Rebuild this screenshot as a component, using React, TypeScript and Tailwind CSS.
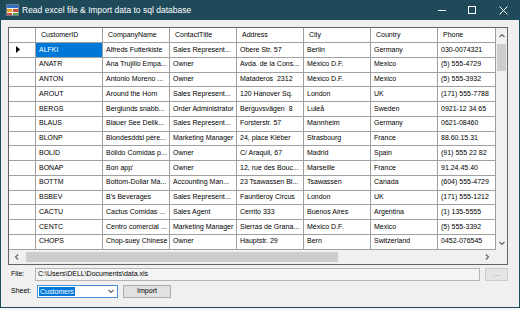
import React from "react";

const COLUMNS = ["CustomerID", "CompanyName", "ContactTitle", "Address", "City", "Country", "Phone"];

const ROWS: string[][] = [
  ["ALFKI", "Alfreds Futterkiste", "Sales Represent...", "Obere Str. 57", "Berlin", "Germany", "030-0074321"],
  ["ANATR", "Ana Trujillo Empa...", "Owner", "Avda. de la Cons...", "México D.F.", "Mexico", "(5) 555-4729"],
  ["ANTON", "Antonio Moreno ...", "Owner", "Mataderos  2312", "México D.F.", "Mexico", "(5) 555-3932"],
  ["AROUT", "Around the Horn", "Sales Represent...", "120 Hanover Sq.", "London", "UK", "(171) 555-7788"],
  ["BERGS", "Berglunds snabb...", "Order Administrator", "Berguvsvägen  8", "Luleå", "Sweden", "0921-12 34 65"],
  ["BLAUS", "Blauer See Delik...", "Sales Represent...", "Forsterstr. 57", "Mannheim", "Germany", "0621-08460"],
  ["BLONP", "Blondesddsl père...", "Marketing Manager", "24, place Kléber", "Strasbourg", "France", "88.60.15.31"],
  ["BOLID", "Bólido Comidas p...", "Owner", "C/ Araquil, 67", "Madrid", "Spain", "(91) 555 22 82"],
  ["BONAP", "Bon app'", "Owner", "12, rue des Bouc...", "Marseille", "France", "91.24.45.40"],
  ["BOTTM", "Bottom-Dollar Ma...", "Accounting Man...", "23 Tsawassen Bl...", "Tsawassen", "Canada", "(604) 555-4729"],
  ["BSBEV", "B's Beverages", "Sales Represent...", "Fauntleroy Circus", "London", "UK", "(171) 555-1212"],
  ["CACTU", "Cactus Comidas ...", "Sales Agent", "Cerrito 333", "Buenos Aires", "Argentina", "(1) 135-5555"],
  ["CENTC", "Centro comercial ...", "Marketing Manager", "Sierras de Grana...", "México D.F.", "Mexico", "(5) 555-3392"],
  ["CHOPS", "Chop-suey Chinese", "Owner", "Hauptstr. 29", "Bern", "Switzerland", "0452-076545"],
];

const COL_W = ["w-[67px]", "w-[67px]", "w-[67px]", "w-[67px]", "w-[67px]", "w-[67px]", "w-[58px]"];

function AppIcon() {
  return (
    <svg width="13" height="12" viewBox="0 0 13 12" aria-hidden>
      <rect x="0.5" y="0.5" width="12" height="11" fill="#f4f4f4" stroke="#6b7f8c" strokeWidth="1" />
      <rect x="1" y="1" width="11" height="3" fill="#2f6fc4" />
      <rect x="1" y="5" width="5" height="3" fill="#e0a020" />
      <rect x="7" y="5" width="5" height="3" fill="#d24a3a" />
      <rect x="1" y="9" width="5" height="2" fill="#d24a3a" />
      <rect x="7" y="9" width="5" height="2" fill="#58a84a" />
    </svg>
  );
}

function TitleBar() {
  return (
    <div className="flex h-[20px] items-center bg-[#1e4a5a] text-white">
      <div className="ml-[5px] mr-[3px] flex items-center">
        <AppIcon />
      </div>
      <span className="text-[8.5px] leading-none">Read excel file &amp; Import data to sql database</span>
      <div className="ml-auto flex h-full items-center">
        <span className="flex w-[30px] justify-center">
          <span className="block h-px w-[8px] bg-white" />
        </span>
        <span className="flex w-[30px] justify-center">
          <span className="block h-[8px] w-[8px] border border-white" />
        </span>
        <span className="flex w-[32px] justify-center">
          <svg width="9" height="9" viewBox="0 0 9 9" aria-hidden>
            <path d="M0.5 0.5 L8.5 8.5 M8.5 0.5 L0.5 8.5" stroke="white" strokeWidth="1" />
          </svg>
        </span>
      </div>
    </div>
  );
}

function Chevron({ dir }: { dir: "up" | "down" | "left" | "right" }) {
  const d = {
    up: "M1.5 5 L4 2.5 L6.5 5",
    down: "M1.5 3 L4 5.5 L6.5 3",
    left: "M5 1.5 L2.5 4 L5 6.5",
    right: "M3 1.5 L5.5 4 L3 6.5",
  }[dir];
  return (
    <svg width="8" height="8" viewBox="0 0 8 8" aria-hidden>
      <path d={d} fill="none" stroke="#606060" strokeWidth="1.1" />
    </svg>
  );
}

function Grid() {
  return (
    <div className="mx-[7px] mt-[7px] flex w-[500px] flex-col border border-[#646464] bg-white">
      <div className="flex">
        <div className="flex w-[487px] flex-col overflow-hidden">
          <div className="flex h-[15px]">
            <div className="w-[27px] shrink-0 border-r border-b border-[#a0a0a0]" />
            {COLUMNS.map((c, i) => (
              <div
                key={c}
                className={`${COL_W[i]} flex shrink-0 items-center overflow-hidden whitespace-nowrap border-r border-b border-[#a0a0a0] pl-[5px] text-[7px]`}
              >
                {c}
              </div>
            ))}
          </div>
          {ROWS.map((row, r) => (
            <div key={row[0]} className="flex h-[14.75px]">
              <div className="flex w-[27px] shrink-0 items-center border-r border-b border-[#a0a0a0] pl-[7px]">
                {r === 0 && (
                  <svg width="4" height="7" viewBox="0 0 4 7" aria-hidden>
                    <path d="M0 0 L4 3.5 L0 7 Z" fill="#000" />
                  </svg>
                )}
              </div>
              {row.map((cell, i) => {
                const selected = r === 0 && i === 0;
                return (
                  <div
                    key={i}
                    className={`${COL_W[i]} flex shrink-0 items-center overflow-hidden whitespace-pre border-r border-b border-[#a0a0a0] pl-[3px] text-[7px] ${
                      selected ? "bg-[#0078d7] text-white" : "text-black"
                    }`}
                  >
                    {cell}
                  </div>
                );
              })}
            </div>
          ))}
        </div>
        <div className="flex w-[11px] flex-col items-center bg-[#f0f0f0]">
          <div className="flex h-[15px] items-center justify-center">
            <Chevron dir="up" />
          </div>
          <div className="mt-[1px] h-[27px] w-[9px] bg-[#cdcdcd]" />
          <div className="flex-1" />
          <div className="flex h-[14px] items-center justify-center">
            <Chevron dir="down" />
          </div>
        </div>
      </div>
      <div className="flex h-[14px] bg-[#f0f0f0]">
        <div className="flex w-[487px] items-center">
          <div className="flex w-[16px] justify-center">
            <Chevron dir="left" />
          </div>
          <div className="ml-[1px] h-[10px] w-[312px] bg-[#cdcdcd]" />
          <div className="ml-auto mr-[3px] flex w-[12px] justify-center">
            <Chevron dir="right" />
          </div>
        </div>
        <div className="w-[11px] bg-[#f0f0f0]" />
      </div>
    </div>
  );
}

function Controls() {
  return (
    <div className="flex flex-col gap-[4px] px-[10px] pt-[3px] text-[7px]">
      <div className="flex h-[13px] items-center">
        <span className="w-[24px]">File:</span>
        <div className="flex h-[13px] w-[445px] items-center border border-[#b4b4b4] bg-[#f4f4f4] pl-[2px]">
          C:\Users\DELL\Documents\data.xls
        </div>
        <div className="ml-[5px] flex h-[13px] w-[23px] items-center justify-center border border-[#cccccc] bg-[#e5e5e5] text-[#8a8a8a]">
          ...
        </div>
      </div>
      <div className="flex h-[13px] items-center">
        <span className="w-[26px]">Sheet:</span>
        <div className="flex h-[13px] w-[81px] items-center border border-[#4a90d9] bg-white pl-[1px]">
          <span className="bg-[#0078d7] px-[1px] leading-[9px] text-white">Customers</span>
          <span className="ml-auto mr-[2px] flex">
            <Chevron dir="down" />
          </span>
        </div>
        <div className="ml-[5px] flex h-[13px] w-[48px] items-center justify-center border border-[#adadad] bg-[#e1e1e1]">
          Import
        </div>
      </div>
    </div>
  );
}

export default function App() {
  return (
    <div
      className="h-[310px] w-[520px] overflow-hidden bg-[#f3f3f3] text-black"
      style={{ fontFamily: '"Liberation Sans", Arial, sans-serif' }}
    >
      <div className="flex h-[308px] w-[520px] flex-col border-x border-b border-[#1e4a5a] bg-[#f0f0f0]">
        <TitleBar />
        <Grid />
        <Controls />
      </div>
    </div>
  );
}
